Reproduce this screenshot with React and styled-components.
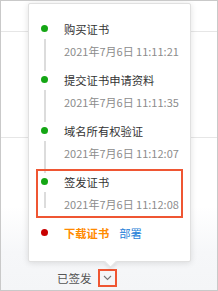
import React from "react";
import styled, { createGlobalStyle } from "styled-components";

const Global = createGlobalStyle`
  html, body {
    margin: 0;
    padding: 0;
    background: #fff;
  }
  body {
    font-family: "Noto Sans CJK SC", "Noto Sans", sans-serif;
  }
`;

const Page = styled.div`
  position: relative;
  width: 218px;
  height: 291px;
  box-sizing: border-box;
  border: 1px solid #c9c9c9;
  display: flex;
  flex-direction: column;
  overflow: hidden;
`;

const Row = styled.div`
  height: ${(p) => (p.h ? p.h + "px" : "auto")};
  flex: ${(p) => (p.grow ? 1 : "none")};
  border-bottom: ${(p) => (p.line ? "1px solid #e6e6e6" : "none")};
  background: ${(p) => p.bg || "#fff"};
  display: flex;
  align-items: flex-end;
`;

const Status = styled.div`
  display: flex;
  align-items: center;
  gap: 6px;
  padding: 0 0 3px 56px;
  font-size: 11.5px;
  color: #555;
`;

const ToggleBox = styled.div`
  width: 19px;
  height: 18px;
  box-sizing: border-box;
  border: 2px solid #ef5633;
  display: flex;
  align-items: center;
  justify-content: center;
`;

const Popover = styled.div`
  position: absolute;
  left: 27px;
  top: 2px;
  width: 163px;
  height: 259px;
  box-sizing: border-box;
  background: #fff;
  border: 1px solid #e0e0e0;
  border-radius: 2px;
  box-shadow: 0 1px 6px rgba(0, 0, 0, 0.12);
  padding: 15px 0 0 0;

  &::after {
    content: "";
    position: absolute;
    left: 77px;
    bottom: -5px;
    width: 8px;
    height: 8px;
    background: #fff;
    border-right: 1px solid #e0e0e0;
    border-bottom: 1px solid #e0e0e0;
    transform: rotate(45deg);
    box-shadow: 2px 2px 3px rgba(0, 0, 0, 0.06);
  }
`;

const Item = styled.div`
  position: relative;
  height: 51px;
  padding-left: 35px;

  &::before {
    content: "";
    position: absolute;
    left: 15px;
    top: 20px;
    bottom: ${(p) => (p.last ? "15px" : "-1px")};
    width: 2px;
    background: #dcdcdc;
  }

  ${(p) =>
    p.highlight &&
    `
    &::after {
      content: "";
      position: absolute;
      left: 7px;
      right: 7px;
      top: -3px;
      bottom: 5px;
      border: 2px solid #ef5633;
    }
  `}
`;

const Dot = styled.span`
  position: absolute;
  left: 12px;
  top: 6px;
  width: 7px;
  height: 7px;
  border-radius: 50%;
  background: ${(p) => p.color || "#14a614"};
`;

const Title = styled.div`
  font-size: 11.3px;
  line-height: 20px;
  color: #333;
`;

const Time = styled.div`
  font-size: 11px;
  line-height: 20px;
  margin-top: 2px;
  color: #8c8c8c;
`;

const Actions = styled.div`
  position: relative;
  padding-left: 35px;
  display: flex;
  gap: 10px;
  line-height: 20px;
  font-size: 11.3px;
`;

const Link = styled.span`
  color: ${(p) => p.color};
  font-weight: ${(p) => (p.bold ? 700 : 400)};
`;

const steps = [
  { title: "购买证书", time: "2021年7月6日 11:11:21" },
  { title: "提交证书申请资料", time: "2021年7月6日 11:11:35" },
  { title: "域名所有权验证", time: "2021年7月6日 11:12:07" },
  { title: "签发证书", time: "2021年7月6日 11:12:08", highlight: true },
];

export default function App() {
  return (
    <>
      <Global />
      <Page>
        <Row h={30} line />
        <Row h={105} line />
        <Row grow bg="linear-gradient(#fff 0%, #fff 45%, #f6f7f9 75%, #f4f5f7 100%)">
          <Status>
            已签发
            <ToggleBox>
              <svg width="9" height="6" viewBox="0 0 9 6">
                <path d="M1 1l3.5 3.5L8 1" fill="none" stroke="#777" strokeWidth="1.1" />
              </svg>
            </ToggleBox>
          </Status>
        </Row>
        <Popover>
          {steps.map((s, i) => (
            <Item key={s.title} highlight={s.highlight} last={i === steps.length - 1}>
              <Dot />
              <Title>{s.title}</Title>
              <Time>{s.time}</Time>
            </Item>
          ))}
          <Actions>
            <Dot color="#c80000" />
            <Link color="#ff8a00" bold>
              下载证书
            </Link>
            <Link color="#1f7fd8">部署</Link>
          </Actions>
        </Popover>
      </Page>
    </>
  );
}
